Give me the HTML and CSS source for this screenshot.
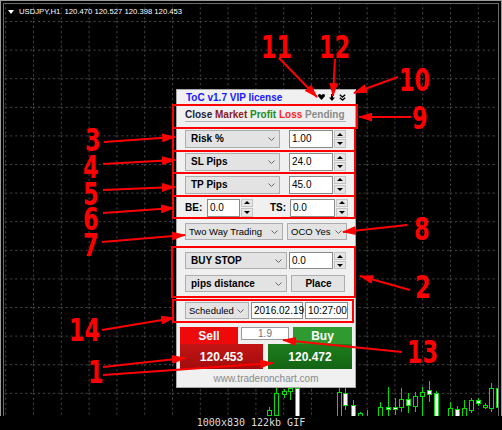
FILE: index.html
```html
<!DOCTYPE html>
<html>
<head>
<meta charset="utf-8">
<link rel="stylesheet" href="styles.css">
</head>
<body>
<div class="screen">
  <div class="chart">
    <div class="plot">
      <svg class="grid" width="494" height="412" viewBox="4 4 494 412">
        <defs>
          <pattern id="gp" x="33" y="21" width="27.8" height="28.6" patternUnits="userSpaceOnUse">
            <line x1="0.5" y1="0" x2="0.5" y2="28.6" stroke="#4a4a4a" stroke-width="1" stroke-dasharray="2 3"/>
            <line x1="0" y1="0.5" x2="27.8" y2="0.5" stroke="#4a4a4a" stroke-width="1" stroke-dasharray="2 3"/>
          </pattern>
        </defs>
        <rect x="4" y="4" width="494" height="412" fill="url(#gp)"/>
        <g class="candles" stroke="#00e000" stroke-width="1">
          <line x1="269.5" y1="407" x2="269.5" y2="416"/><rect x="267.5" y="410.5" width="4" height="5" fill="#000"/>
          <line x1="276.5" y1="388" x2="276.5" y2="416"/><rect x="274.5" y="393.5" width="4" height="22" fill="#000"/>
          <line x1="284.5" y1="389" x2="284.5" y2="398"/><rect x="282.5" y="391.5" width="4" height="3" fill="#000"/>
          <line x1="290.5" y1="388" x2="290.5" y2="400"/><rect x="288.5" y="388.5" width="4" height="3" fill="#000"/>
          <line x1="297.5" y1="388" x2="297.5" y2="416"/><rect x="295.5" y="388.5" width="4" height="28" fill="#fff"/>
          <line x1="339.5" y1="388" x2="339.5" y2="416"/><rect x="337.5" y="392.5" width="4" height="24" fill="#000"/>
          <line x1="345.5" y1="388" x2="345.5" y2="410"/><rect x="343.5" y="393.5" width="4" height="12" fill="#fff"/>
          <line x1="353.5" y1="400" x2="353.5" y2="416"/><rect x="351.5" y="405.5" width="4" height="11" fill="#fff"/>
          <line x1="360.5" y1="412" x2="360.5" y2="416"/><rect x="358.5" y="413.5" width="4" height="3" fill="#000"/>
          <line x1="367.5" y1="410" x2="367.5" y2="416"/>
          <line x1="380.5" y1="402" x2="380.5" y2="416"/><rect x="378.5" y="407.5" width="4" height="9" fill="#000"/>
          <line x1="388.5" y1="387" x2="388.5" y2="416"/><rect x="386.5" y="407.5" width="4" height="2" fill="#fff"/>
          <line x1="395.5" y1="398" x2="395.5" y2="415"/><rect x="393.5" y="407.5" width="4" height="2" fill="#fff"/>
          <line x1="401.5" y1="388" x2="401.5" y2="412"/><rect x="399.5" y="399.5" width="4" height="8" fill="#000"/>
          <line x1="408.5" y1="393" x2="408.5" y2="413"/><rect x="406.5" y="399.5" width="4" height="6" fill="#fff"/>
          <line x1="415.5" y1="392" x2="415.5" y2="412"/><rect x="413.5" y="396.5" width="4" height="10" fill="#000"/>
          <line x1="422.5" y1="387" x2="422.5" y2="416"/><rect x="420.5" y="392.5" width="4" height="4" fill="#000"/>
          <line x1="429.5" y1="381" x2="429.5" y2="402"/><rect x="427.5" y="390.5" width="4" height="4" fill="#fff"/>
          <line x1="436.5" y1="391" x2="436.5" y2="416"/><rect x="434.5" y="393.5" width="4" height="23" fill="#fff"/>
          <line x1="450.5" y1="402" x2="450.5" y2="416"/><rect x="448.5" y="408.5" width="4" height="8" fill="#000"/>
          <line x1="457.5" y1="406" x2="457.5" y2="416"/><rect x="455.5" y="409.5" width="4" height="7" fill="#fff"/>
          <line x1="464.5" y1="400" x2="464.5" y2="416"/><rect x="462.5" y="408.5" width="4" height="8" fill="#000"/>
          <line x1="471.5" y1="398" x2="471.5" y2="413"/><rect x="469.5" y="400.5" width="4" height="10" fill="#000"/>
          <line x1="478.5" y1="398" x2="478.5" y2="406"/><rect x="476.5" y="400.5" width="4" height="3" fill="#fff"/>
          <line x1="485.5" y1="403" x2="485.5" y2="409"/><rect x="483.5" y="405.5" width="4" height="2" fill="#000"/>
          <line x1="491.5" y1="383" x2="491.5" y2="412"/><rect x="489.5" y="388.5" width="4" height="20" fill="#000"/>
          <line x1="498.5" y1="385" x2="498.5" y2="410"/><rect x="496.5" y="388.5" width="4" height="19" fill="#fff"/>
        </g>
      </svg>
      <div class="symbol"><span class="tri"></span><span>USDJPY,H1&nbsp; 120.470 120.527 120.398 120.453</span></div>
    </div>
  </div>
  <div class="caption">1000x830 122kb GIF</div>

  <div class="panel">
    <div class="title">
      <span class="name">ToC v1.7 VIP license</span>
      <span class="ticons">
        <svg width="7" height="6" viewBox="0 0 7 6"><path d="M3.5 6 L0.3 2.6 C-0.4 1.6 0.2 0 1.6 0 C2.6 0 3.2 0.8 3.5 1.3 C3.8 0.8 4.4 0 5.4 0 C6.8 0 7.4 1.6 6.7 2.6 Z" fill="#000"/></svg>
        <svg width="6" height="7" viewBox="0 0 6 7"><path d="M2 0 H4 V3.5 H6 L3 7 L0 3.5 H2 Z" fill="#000"/></svg>
        <svg width="7" height="7" viewBox="0 0 7 7"><path d="M0.8 0.8 L3.5 3 L6.2 0.8 M0.8 3.8 L3.5 6 L6.2 3.8" stroke="#000" stroke-width="1.4" fill="none"/></svg>
      </span>
    </div>
    <div class="tabs">
      <div class="tabline"><span class="t-close">Close</span> <span class="t-market">Market</span> <span class="t-profit">Profit</span> <span class="t-loss">Loss</span> <span class="t-pending">Pending</span></div>
    </div>

    <div class="row r1">
      <div class="select bold w95">Risk %<svg class="chev" width="7" height="4" viewBox="0 0 7 4"><path d="M0.5 0.5 L3.5 3.5 L6.5 0.5" stroke="#666" fill="none"/></svg></div>
      <div class="input w44 ml9">1.00</div>
      <div class="spin"><span class="up"></span><span class="dn"></span></div>
    </div>
    <div class="row r2">
      <div class="select bold w95">SL Pips<svg class="chev" width="7" height="4" viewBox="0 0 7 4"><path d="M0.5 0.5 L3.5 3.5 L6.5 0.5" stroke="#666" fill="none"/></svg></div>
      <div class="input w44 ml9">24.0</div>
      <div class="spin"><span class="up"></span><span class="dn"></span></div>
    </div>
    <div class="row r2">
      <div class="select bold w95">TP Pips<svg class="chev" width="7" height="4" viewBox="0 0 7 4"><path d="M0.5 0.5 L3.5 3.5 L6.5 0.5" stroke="#666" fill="none"/></svg></div>
      <div class="input w44 ml9">45.0</div>
      <div class="spin"><span class="up"></span><span class="dn"></span></div>
    </div>
    <div class="row r2">
      <span class="lbl w22">BE:</span>
      <div class="input w33">0.0</div>
      <div class="spin"><span class="up"></span><span class="dn"></span></div>
      <span class="lbl ml17 w20">TS:</span>
      <div class="input w45">0.0</div>
      <div class="spin"><span class="up"></span><span class="dn"></span></div>
    </div>
    <div class="row r3">
      <div class="select plain w98">Two Way Trading<svg class="chev" width="7" height="4" viewBox="0 0 7 4"><path d="M0.5 0.5 L3.5 3.5 L6.5 0.5" stroke="#666" fill="none"/></svg></div>
      <div class="select plain w60 ml4">OCO Yes<svg class="chev" width="7" height="4" viewBox="0 0 7 4"><path d="M0.5 0.5 L3.5 3.5 L6.5 0.5" stroke="#666" fill="none"/></svg></div>
    </div>
    <div class="row r4">
      <div class="select bold w102">BUY STOP<svg class="chev" width="7" height="4" viewBox="0 0 7 4"><path d="M0.5 0.5 L3.5 3.5 L6.5 0.5" stroke="#666" fill="none"/></svg></div>
      <div class="input w44 ml2">0.0</div>
      <div class="spin"><span class="up"></span><span class="dn"></span></div>
    </div>
    <div class="row r5">
      <div class="select bold w102">pips distance<svg class="chev" width="7" height="4" viewBox="0 0 7 4"><path d="M0.5 0.5 L3.5 3.5 L6.5 0.5" stroke="#666" fill="none"/></svg></div>
      <div class="button w54 ml4">Place</div>
    </div>
    <div class="row r6">
      <div class="select plain w64">Scheduled<svg class="chev" width="7" height="4" viewBox="0 0 7 4"><path d="M0.5 0.5 L3.5 3.5 L6.5 0.5" stroke="#666" fill="none"/></svg></div>
      <div class="input w52 ml2">2016.02.19</div>
      <div class="input w43 ml2">10:27:00</div>
    </div>
    <div class="trade-top">
      <div class="sell">Sell</div>
      <div class="lot">1.9</div>
      <div class="buy">Buy</div>
    </div>
    <div class="trade-price">
      <div class="sell-price">120.453</div>
      <div class="buy-price">120.472</div>
    </div>
    <div class="footer">www.traderonchart.com</div>
  </div>

  <svg class="marks" width="502" height="430" viewBox="0 0 502 430">
    <defs>
      <marker id="ah" viewBox="0 0 14 9" refX="13" refY="4.5" markerWidth="14" markerHeight="9" markerUnits="userSpaceOnUse" orient="auto">
        <path d="M0 0 L14 4.5 L0 9 Z" fill="#ff0000"/>
      </marker>
    </defs>
    <g fill="none" stroke="#ff0000" stroke-width="2">
      <rect x="173" y="105" width="184" height="23"/>
      <rect x="173" y="128" width="182" height="23"/>
      <rect x="173" y="151" width="182" height="22"/>
      <rect x="173" y="173" width="182" height="23"/>
      <rect x="173" y="196" width="182" height="22"/>
      <rect x="172" y="247" width="183" height="50"/>
      <rect x="173" y="300" width="180" height="22"/>
    </g>
    <g stroke="#ff0000" stroke-width="2" marker-end="url(#ah)">
      <line x1="279" y1="58" x2="317" y2="97"/>
      <line x1="335" y1="59" x2="333" y2="96"/>
      <line x1="398" y1="77" x2="354" y2="93"/>
      <line x1="411" y1="117" x2="359" y2="117"/>
      <line x1="104" y1="142" x2="175" y2="137"/>
      <line x1="103" y1="164" x2="175" y2="160"/>
      <line x1="103" y1="190" x2="175" y2="187"/>
      <line x1="103" y1="213" x2="174" y2="208"/>
      <line x1="102" y1="242" x2="185" y2="235"/>
      <line x1="407" y1="225" x2="343" y2="232"/>
      <line x1="410" y1="290" x2="360" y2="276"/>
      <line x1="102" y1="330" x2="174" y2="318"/>
      <line x1="103" y1="367" x2="185" y2="358"/>
      <line x1="103" y1="375" x2="273" y2="363"/>
      <line x1="402" y1="352" x2="283" y2="340"/>
    </g>
  </svg>
  <div class="ann">
    <span class="n n11">11</span>
    <span class="n n12">12</span>
    <span class="n n10">10</span>
    <span class="n n9">9</span>
    <span class="n n3">3</span>
    <span class="n n4">4</span>
    <span class="n n5">5</span>
    <span class="n n6">6</span>
    <span class="n n7">7</span>
    <span class="n n8">8</span>
    <span class="n n2">2</span>
    <span class="n n14">14</span>
    <span class="n n1">1</span>
    <span class="n n13">13</span>
  </div>
</div>
</body>
</html>
```

FILE: styles.css
```css
* { box-sizing: border-box; }
html, body { margin: 0; padding: 0; }
body {
  background: #000;
  width: 502px;
  height: 430px;
  overflow: hidden;
  font-family: "Liberation Sans", Arial, sans-serif;
}
.screen { position: relative; width: 502px; height: 430px; }

.chart {
  height: 416px;
  border: 1px solid #9a9a9a;
  border-bottom: none;
  padding: 2px 2px 0 2px;
}
.plot {
  position: relative;
  height: 413px;
  border: 1px solid #6a6a6a;
  border-bottom: none;
}
.grid { position: absolute; left: 0; top: 0; }
.symbol {
  position: relative;
  display: flex;
  align-items: center;
  gap: 5px;
  padding: 3px 0 0 4px;
  color: #fff;
  font-size: 7.7px;
  line-height: 10px;
  white-space: pre;
}
.tri {
  width: 0; height: 0;
  border-left: 3px solid transparent;
  border-right: 3px solid transparent;
  border-top: 4px solid #fff;
}
.caption {
  height: 14px;
  text-align: center;
  color: #dcdcdc;
  font-family: "DejaVu Sans Mono", monospace;
  font-size: 10px;
  line-height: 14px;
}

/* panel */
.panel {
  position: absolute;
  left: 176px;
  top: 89px;
  width: 180px;
  height: 299px;
  background: #f0f0f0;
  border: 1px solid #a8a8a8;
  display: flex;
  flex-direction: column;
  color: #000;
}
.title {
  height: 15px;
  display: flex;
  align-items: center;
  padding: 0 9px 0 9px;
}
.name { color: #1818ff; font-weight: bold; font-size: 10px; }
.ticons { margin-left: auto; display: flex; align-items: center; gap: 4px; }

.tabs { height: 23px; padding: 4px 0 0 8px; }
.tabline {
  width: 161px;
  font-size: 10px;
  font-weight: bold;
  line-height: 12px;
  border-bottom: 1px solid #b4b4b4;
  white-space: nowrap;
}
.t-close { color: #1c1c3c; }
.t-market { color: #8a1c1c; }
.t-profit { color: #1c8a1c; }
.t-loss { color: #ff2424; }
.t-pending { color: #8a8a8a; }

.row {
  display: flex;
  align-items: stretch;
  padding-left: 8px;
  font-size: 10px;
  height: 18px;
}
.r1 { margin-top: 2px; }
.r2 { margin-top: 5px; }
.r3 { margin-top: 6px; }
.r4 { margin-top: 12px; height: 17px; }
.r5 { margin-top: 6px; height: 17px; }
.r6 { margin-top: 10px; height: 17px; }

.select, .button {
  display: flex;
  align-items: center;
  background: #e3e3e3;
  border: 1px solid #adadad;
  padding: 0 4px 0 5px;
  white-space: nowrap;
}
.select.plain { font-size: 9.5px; padding-left: 3px; }
.button { justify-content: center; font-weight: bold; }
.select .chev { margin-left: auto; flex: none; }
.bold { font-weight: bold; }
.input {
  display: flex;
  align-items: center;
  background: #fff;
  border: 1px solid #8a8a8a;
  padding-left: 2px;
  white-space: nowrap;
}
.lbl { display: flex; align-items: center; font-weight: bold; }
.spin {
  width: 12px;
  display: flex;
  flex-direction: column;
  gap: 1px;
  margin-left: 1px;
}
.spin span {
  flex: 1;
  display: flex;
  align-items: center;
  justify-content: center;
  background: #e6e6e6;
  border: 1px solid #c4c4c4;
}
.spin .up::after {
  content: "";
  border-left: 3px solid transparent;
  border-right: 3px solid transparent;
  border-bottom: 3px solid #000;
}
.spin .dn::after {
  content: "";
  border-left: 3px solid transparent;
  border-right: 3px solid transparent;
  border-top: 3px solid #000;
}
.w20 { width: 20px; }
.w22 { width: 22px; }
.w33 { width: 33px; }
.w43 { width: 43px; }
.w44 { width: 44px; }
.w45 { width: 45px; }
.w52 { width: 52px; }
.w54 { width: 54px; }
.w60 { width: 60px; }
.w64 { width: 64px; }
.w95 { width: 95px; }
.w98 { width: 98px; }
.w102 { width: 102px; }
.ml2 { margin-left: 2px; }
.ml4 { margin-left: 4px; }
.ml9 { margin-left: 9px; }
.ml17 { margin-left: 17px; }

.trade-top {
  margin-top: 8px;
  height: 17px;
  display: flex;
  padding-left: 3px;
}
.sell, .buy {
  display: flex;
  align-items: center;
  justify-content: center;
  color: #fff;
  font-weight: bold;
  font-size: 12px;
}
.sell { width: 58px; background: #ee0a0a; }
.buy { width: 59px; margin-left: 4px; background: #2f9a2f; }
.lot {
  width: 48px;
  height: 13px;
  margin-left: 3px;
  background: #fff;
  border: 1px solid #9a9a9a;
  color: #707070;
  font-size: 10px;
  display: flex;
  align-items: center;
  justify-content: center;
}
.trade-price {
  height: 25px;
  display: flex;
  padding-left: 3px;
  gap: 5px;
}
.sell-price, .buy-price {
  display: flex;
  align-items: center;
  justify-content: center;
  color: #fff;
  font-weight: bold;
  font-size: 12px;
}
.sell-price { width: 83px; background: linear-gradient(#c41414, #a20c0c); }
.buy-price { width: 84px; background: linear-gradient(#1e7e1e, #136413); }
.footer {
  height: 18px;
  display: flex;
  align-items: center;
  justify-content: center;
  color: #8a8a8a;
  font-size: 10px;
}

/* annotations */
.marks { position: absolute; left: 0; top: 0; pointer-events: none; }
.ann { position: absolute; left: 0; top: 0; width: 502px; height: 430px; pointer-events: none; }
.n {
  position: absolute;
  font-family: "Liberation Sans Narrow", "DejaVu Sans Condensed", sans-serif;
  font-weight: bold;
  font-size: 32px;
  line-height: 22px;
  color: #ff0000;
  transform: scaleX(0.78);
  transform-origin: 0 0;
}
.n11 { left: 261px; top: 36px; }
.n12 { left: 319px; top: 36px; }
.n10 { left: 399px; top: 69px; }
.n9 { left: 412px; top: 107px; }
.n3 { left: 85px; top: 129px; }
.n4 { left: 83px; top: 156px; }
.n5 { left: 83px; top: 183px; }
.n6 { left: 83px; top: 208px; }
.n7 { left: 83px; top: 234px; }
.n8 { left: 414px; top: 218px; }
.n2 { left: 415px; top: 276px; }
.n14 { left: 69px; top: 319px; }
.n1 { left: 88px; top: 361px; }
.n13 { left: 407px; top: 341px; }
```
